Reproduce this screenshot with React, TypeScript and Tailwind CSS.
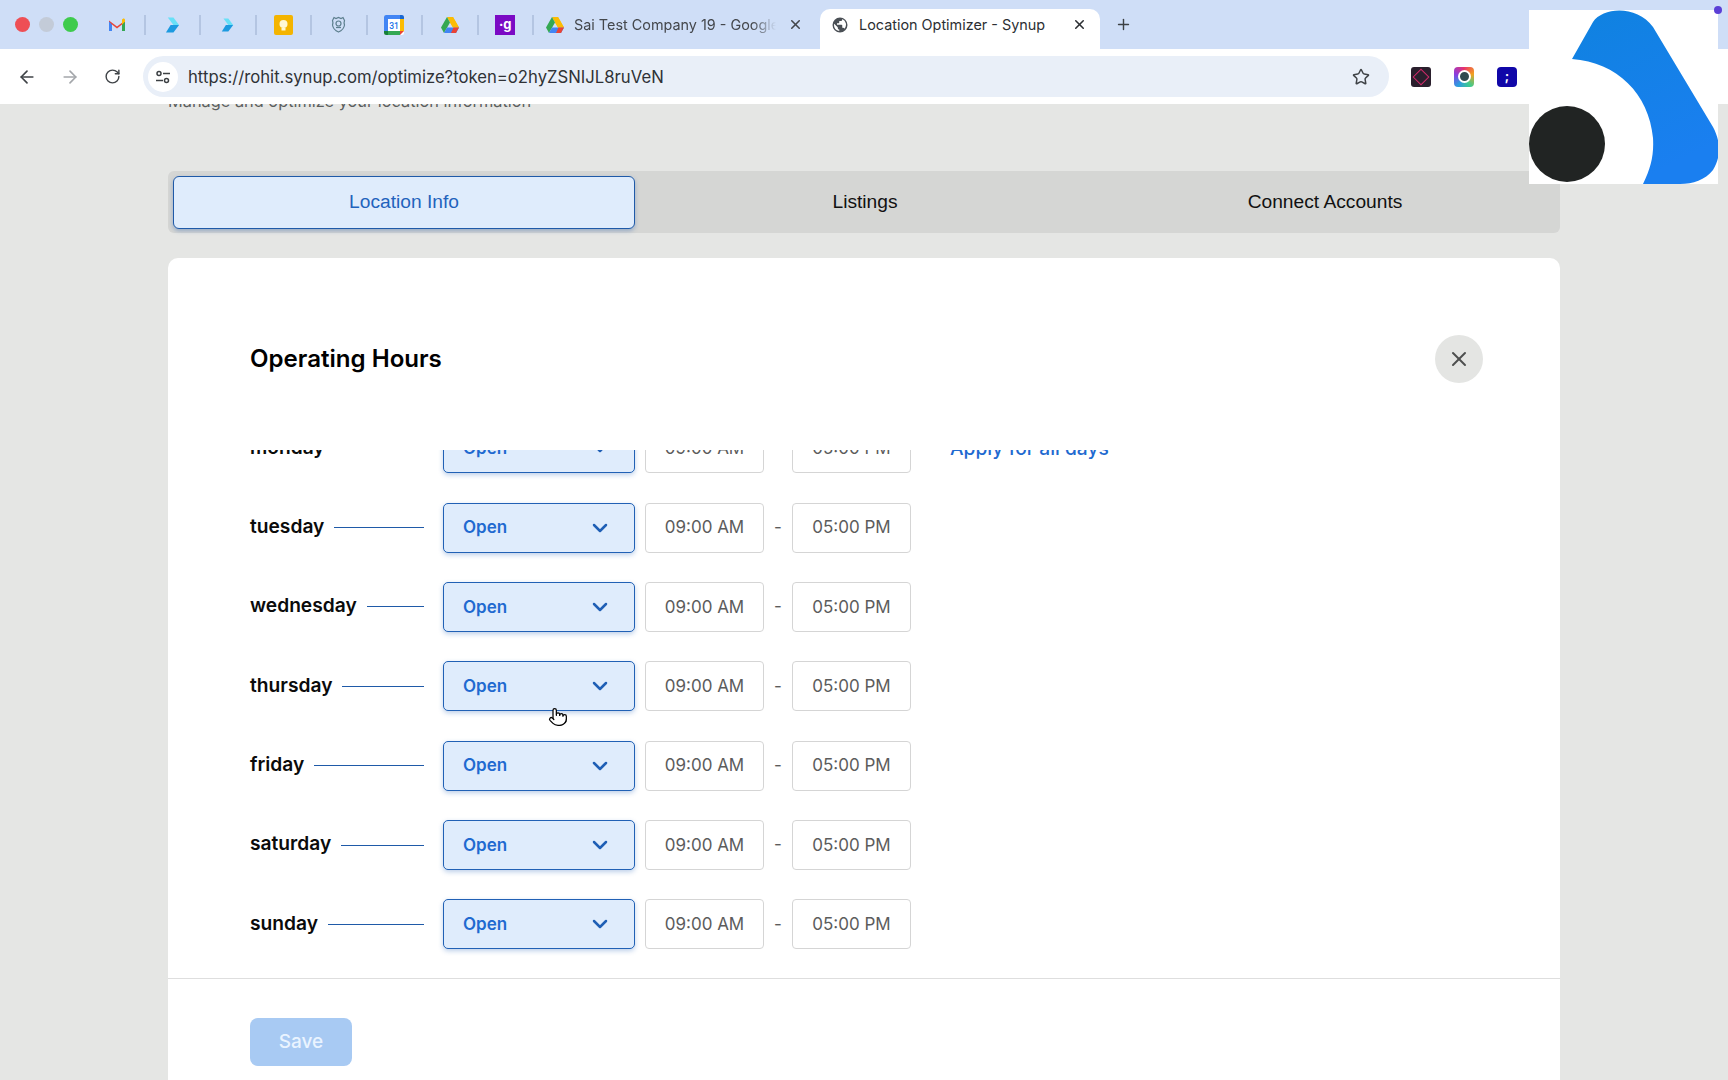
import { ArrowLeft, ArrowRight, ChevronDown, Plus, Pointer, RotateCw, Star, X } from "lucide-react";

const days = ["monday", "tuesday", "wednesday", "thursday", "friday", "saturday", "sunday"];

function Gmail() {
  return (
    <svg width="18" height="14" viewBox="0 0 18 14">
      <path d="M1 13V2.500L9 8.500 17 2.500V13h-3V6.500L9 10.500 4 6.500V13z" fill="#ea4335" />
      <path d="M1 13h3V6.500L1 3.500z" fill="#4285f4" />
      <path d="M14 13h3V3.500l-3 3z" fill="#34a853" />
      <path d="M14 6.500l3-3V2c0-1.200-1.400-1.800-2.300-1.100L14 1.500z" fill="#fbbc04" />
    </svg>
  );
}

function Arrow({ small }: { small?: boolean }) {
  return (
    <svg width={small ? 13 : 15} height="18" viewBox="0 0 16 18">
      <path d="M3 1h6l6 8H9z" fill="#67e0f7" />
      <path d="M15 9l-6 8H1l5-8z" fill="#1c9ae0" />
    </svg>
  );
}

function Drive() {
  return (
    <svg width="18" height="16" viewBox="0 0 18 16">
      <path d="M6 0h6l6 10.500h-6z" fill="#fbbc04" />
      <path d="M6 0L0 10.500l3 5.500 6-10.500z" fill="#34a853" />
      <path d="M6 10.500h12L15 16H3z" fill="#4285f4" />
      <path d="M12 0l6 10.500h-6L9 5.500z" fill="#fbbc04" />
      <path d="M12.500 10.500H18L15 16h-5z" fill="#ea4335" />
    </svg>
  );
}

function Keep() {
  return (
    <svg width="19" height="20" viewBox="0 0 19 20">
      <rect width="19" height="20" rx="2" fill="#f4b400" />
      <circle cx="9.500" cy="9" r="4" fill="#fff7d6" />
      <rect x="7.500" y="13" width="4" height="2.500" fill="#fff7d6" />
    </svg>
  );
}

function Shield() {
  return (
    <svg width="15" height="17" viewBox="0 0 15 17" fill="none" stroke="#5d7f8e" strokeWidth="1.200">
      <path d="M3 1.500l2 1 2.500-1 2.500 1 2-1 1.500 3c-.8 2-.5 3 0 4.500C13 12.500 10 15 7.500 16 5 15 2 12.500 1.500 9 2 7.500 2.300 6.500 1.500 4.500z" />
      <circle cx="7.500" cy="7.500" r="2.500" />
      <path d="M5 11.500h5" />
    </svg>
  );
}

function Calendar() {
  return (
    <svg width="20" height="20" viewBox="0 0 20 20">
      <rect width="20" height="20" rx="2" fill="#fff" />
      <path d="M0 2a2 2 0 012-2h14v4H4v12H0z" fill="#4285f4" />
      <path d="M16 0h2a2 2 0 012 2v2h-4z" fill="#1967d2" />
      <path d="M16 4h4v12h-4z" fill="#fbbc04" />
      <path d="M4 16h12v4H4z" fill="#34a853" />
      <path d="M0 16h4v4H2a2 2 0 01-2-2z" fill="#188038" />
      <path d="M16 16h4l-4 4z" fill="#ea4335" />
      <text x="10" y="13.500" fontSize="8.500" fontFamily="Roboto, sans-serif" fontWeight="500" textAnchor="middle" fill="#1a73e8">31</text>
    </svg>
  );
}

function PurpleG() {
  return (
    <div className="flex h-[20px] w-[20px] items-center justify-center bg-[#7b0ac4] text-[13px] font-bold leading-none text-white">
      ·g
    </div>
  );
}

function Globe() {
  return (
    <svg width="18" height="18" viewBox="0 0 24 24">
      <path
        d="M12 2a10 10 0 100 20 10 10 0 000-20zM4 12c0-.6.100-1.200.200-1.800L9 15v1a2 2 0 002 2v1.900A8 8 0 014 12zm13.900 4.900A2 2 0 0016 15.500h-1v-3a1 1 0 00-1-1H8v-2h2a1 1 0 001-1v-2h2a2 2 0 002-2v-.4a8 8 0 012.900 12.800z"
        fill="#4a4f55"
      />
    </svg>
  );
}

function Tune() {
  return (
    <svg width="16" height="16" viewBox="0 0 16 16" fill="none" stroke="#3c4043" strokeWidth="1.500">
      <circle cx="4" cy="4.500" r="2" />
      <path d="M8 4.500h7" />
      <circle cx="11.500" cy="11.500" r="2" />
      <path d="M1 11.500h7" />
    </svg>
  );
}

function Sep() {
  return <div className="h-[20px] w-[2px] bg-[#b4c5e2]" />;
}

function PinnedTab({ children }: { children: React.ReactNode }) {
  return <div className="flex w-[53.500px] shrink-0 items-center justify-center">{children}</div>;
}

function Logo() {
  return (
    <div className="absolute left-[1529px] top-[10px] z-20 h-[174px] w-[189px] bg-white">
      <svg width="189" height="174" viewBox="0 0 189 174">
        <defs>
          <linearGradient id="logoBlue" x1="0" y1="0" x2="0.400" y2="1">
            <stop offset="0" stopColor="#0f82e0" />
            <stop offset="1" stopColor="#1a7ff0" />
          </linearGradient>
        </defs>
        <path
          d="M43 49 L64 12 C74 -3 108 -5 124 17 L184 117 C192 132 192 147 184 160 C176 170 164 174 151 174 L114 174 C122 158 125 145 124 128 C120 84 88 52 43 49 Z"
          fill="url(#logoBlue)"
        />
        <circle cx="38" cy="134" r="38" fill="#212423" />
      </svg>
    </div>
  );
}

function Row({ day, first }: { day: string; first: boolean }) {
  return (
    <div className="flex h-[50px] items-center">
      <div className="flex w-[193px] shrink-0 items-center pr-[19px]">
        <span className="-mt-[2px] text-[19.200px] font-semibold leading-none text-[#0b0b0b]">{day}</span>
        {!first && <div className="ml-[10px] h-px flex-1 bg-[#1f5aa8]" />}
      </div>
      <div className="flex h-[50px] w-[192px] shrink-0 items-center justify-between rounded-[5px] border border-[#2161b5] bg-[#dfecfc] pl-[19px] pr-[22px] shadow-[0_2px_5px_rgba(33,97,181,0.3)]">
        <span className="pt-[1px] text-[17px] font-semibold text-[#1f6ad0]">Open</span>
        <ChevronDown size={24} strokeWidth={2.500} className="text-[#1f5fb5]" />
      </div>
      <div className="ml-[10px] flex h-[50px] w-[119px] shrink-0 items-center justify-center rounded-[4px] border border-[#d5d5d5] pt-[1px] text-[17px] text-[#5c5c5c]">
        09:00 AM
      </div>
      <div className="w-[28px] shrink-0 text-center text-[17px] text-[#5c5c5c]">-</div>
      <div className="flex h-[50px] w-[119px] shrink-0 items-center justify-center rounded-[4px] border border-[#d5d5d5] pt-[1px] text-[17px] text-[#5c5c5c]">
        05:00 PM
      </div>
      {first && <span className="ml-[39px] text-[19.200px] font-medium text-[#1f6ad0]">Apply for all days</span>}
    </div>
  );
}

export default function App() {
  return (
    <div className="relative h-[1080px] overflow-hidden bg-[#e5e6e4] font-['Inter',sans-serif]">
      {/* Tab strip */}
      <div className="relative z-10 flex h-[49px] items-end bg-[#cfdef7]">
        <div className="flex h-[49px] w-[90px] shrink-0 items-center gap-[9px] pb-[1px] pl-[15px]">
          <div className="h-[15px] w-[15px] rounded-full bg-[#ee4f55]" />
          <div className="h-[15px] w-[15px] rounded-full bg-[#c3cbd8]" />
          <div className="h-[15px] w-[15px] rounded-full bg-[#3ecb4d]" />
        </div>
        <div className="flex h-[49px] items-center">
          <PinnedTab><Gmail /></PinnedTab>
          <Sep />
          <PinnedTab><Arrow /></PinnedTab>
          <Sep />
          <PinnedTab><Arrow small /></PinnedTab>
          <Sep />
          <PinnedTab><Keep /></PinnedTab>
          <Sep />
          <PinnedTab><Shield /></PinnedTab>
          <Sep />
          <PinnedTab><Calendar /></PinnedTab>
          <Sep />
          <PinnedTab><Drive /></PinnedTab>
          <Sep />
          <PinnedTab><PurpleG /></PinnedTab>
          <Sep />
        </div>
        <div className="flex h-[49px] w-[286px] shrink-0 items-center pl-[12px]">
          <Drive />
          <span className="ml-[10px] w-[202px] overflow-hidden whitespace-nowrap text-[14.400px] text-[#44474c] [mask-image:linear-gradient(to_right,black_88%,transparent)]">
            Sai Test Company 19 - Google
          </span>
          <X size={15} strokeWidth={2.500} className="ml-[12px] text-[#44474c]" />
        </div>
        <div className="flex h-[40px] w-[280px] shrink-0 items-center rounded-t-[10px] bg-white pb-[9px] pl-[11px]">
          <Globe />
          <span className="ml-[10px] w-[213px] whitespace-nowrap text-[14.400px] text-[#2c2f33]">
            Location Optimizer - Synup
          </span>
          <X size={15} strokeWidth={2.500} className="text-[#2c2f33]" />
        </div>
        <div className="flex h-[49px] items-center pl-[15px]">
          <Plus size={17} strokeWidth={2} className="text-[#3c4043]" />
        </div>
      </div>

      {/* Toolbar */}
      <div className="relative z-10 flex h-[55px] items-center bg-white pl-[17px]">
        <ArrowLeft size={20} strokeWidth={2} className="shrink-0 text-[#3f4347]" />
        <ArrowRight size={20} strokeWidth={2} className="ml-[23px] shrink-0 text-[#a4a7ab]" />
        <RotateCw size={17} strokeWidth={2} className="ml-[24px] shrink-0 text-[#3f4347]" />
        <div className="ml-[22px] flex h-[41px] w-[1246px] shrink-0 items-center rounded-full bg-[#e9eff8] pl-[5px] pr-[19px]">
          <div className="flex h-[30px] w-[30px] items-center justify-center rounded-full bg-white">
            <Tune />
          </div>
          <span className="ml-[10px] flex-1 pt-[2px] text-[16.700px] text-[#2f3236]">
            https://rohit.synup.com/optimize?token=o2hyZSNIJL8ruVeN
          </span>
          <Star size={18} strokeWidth={2} className="text-[#3f4347]" />
        </div>
        <div className="ml-[22px] flex items-center gap-[23px]">
          <div className="flex h-[20px] w-[20px] items-center justify-center rounded-[3px] bg-[#2a1f2d]">
            <div className="h-[12px] w-[12px] rotate-45 border border-[#d02a6a]" />
          </div>
          <div className="flex h-[20px] w-[20px] items-center justify-center rounded-[4px] bg-[conic-gradient(#e8326b,#f4a21e,#3ecb8d,#2d9be0,#8a3de0,#e8326b)]">
            <div className="h-[13px] w-[13px] rounded-full border-2 border-white bg-[#2f4a4f]" />
          </div>
          <div className="flex h-[20px] w-[20px] items-center justify-center rounded-[4px] bg-[#1007a8] text-[13px] font-bold leading-none text-white">
            ;
          </div>
        </div>
      </div>

      {/* Page */}
      <div className="mx-[168px] w-[1392px]">
        <p className="-mt-[15px] h-[24px] text-[16.350px] leading-[24px] text-[#5c5f5e]">
          Manage and optimize your location information
        </p>

        <div className="mt-[58px] grid h-[62px] grid-cols-[462px_1fr_1fr] rounded-[6px] bg-[#d5d6d4] p-[5px] font-['Liberation_Sans',sans-serif] text-[19.200px] text-[#111]">
          <div className="flex h-[53px] items-center justify-center rounded-[6px] border border-[#1f5aa8] bg-[#dfecfc] text-[#1f63bd] shadow-[0_2px_4px_rgba(31,90,168,0.35)]">
            Location Info
          </div>
          <div className="flex items-center justify-center">Listings</div>
          <div className="flex items-center justify-center">Connect Accounts</div>
        </div>

        <div className="mt-[25px] h-[900px] rounded-t-[10px] bg-white">
          <div className="flex h-[192px] items-start justify-between pl-[82px] pr-[77px] pt-[77px]">
            <h1 className="text-[24.100px] font-semibold leading-[48px] text-black">Operating Hours</h1>
            <div className="flex h-[48px] w-[48px] items-center justify-center rounded-full bg-[#e4e5e3]">
              <X size={24} strokeWidth={2} className="text-[#4d4f4e]" />
            </div>
          </div>

          <div className="h-[529px] overflow-hidden border-b border-[#dedede] pl-[82px]">
            <div className="-mt-[26.700px] flex flex-col gap-[29.350px]">
              {days.map((day, i) => (
                <Row key={day} day={day} first={i === 0} />
              ))}
            </div>
          </div>

          <div className="pl-[82px] pt-[39px]">
            <button className="h-[48px] w-[102px] rounded-[8px] bg-[#a8caf3] text-[19px] font-medium text-[#eaf4ff]">
              Save
            </button>
          </div>
        </div>
      </div>

      <Logo />
      <div className="absolute left-[1714px] top-[6px] z-20 h-[8px] w-[8px] rounded-full bg-[#5b3fd6]" />
      <Pointer size={20} strokeWidth={1.500} className="absolute left-[548px] top-[707px] fill-white text-black" />
    </div>
  );
}
